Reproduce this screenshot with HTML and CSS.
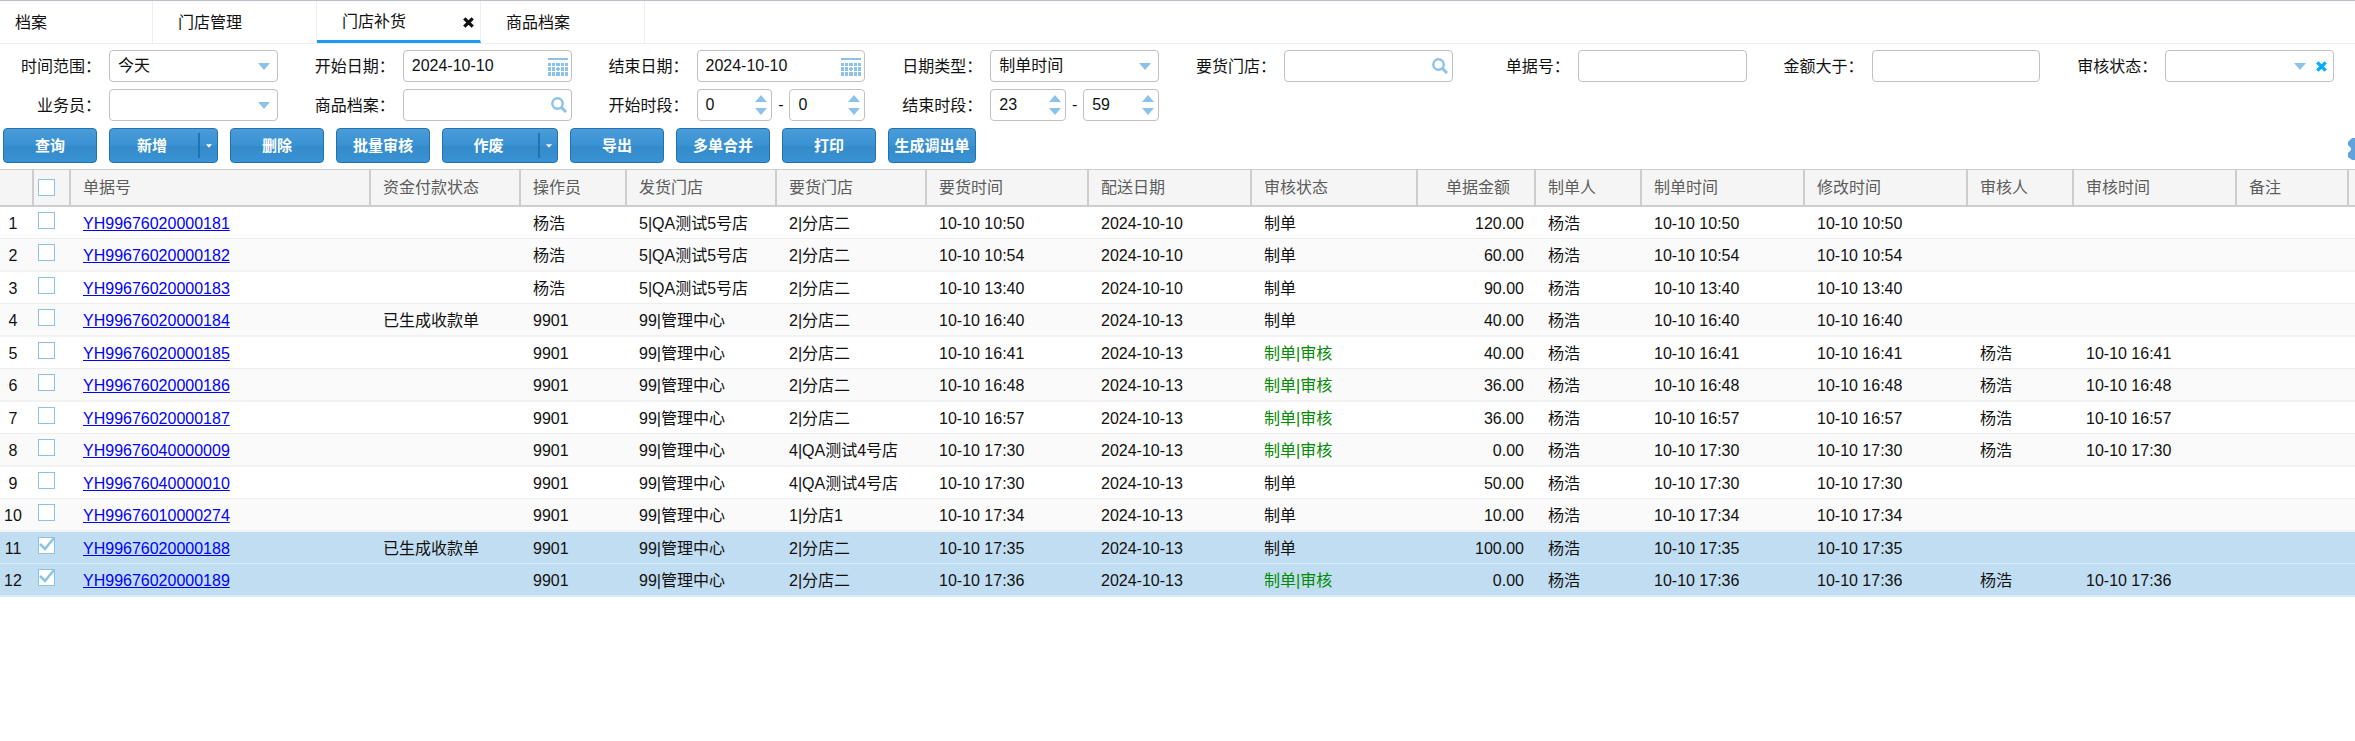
FILE: index.html
```
<!DOCTYPE html>
<html lang="zh-CN">
<head>
<meta charset="utf-8">
<title>门店补货</title>
<link rel="stylesheet" href="styles.css">
</head>
<body>
<svg class="defs" aria-hidden="true">
  <symbol id="calendar" viewBox="0 0 20 18"><path d="M0 0h20v2H0zM0 5h3v3H0zM4 5h3v3H4zM8 5h4v3H8zM13 5h3v3h-3zM17 5h3v3h-3zM0 9h3v4H0zM4 9h3v4H4zM9 9h2v1h1v2h-1v1H9v-1H8v-2h1zM13 9h3v4h-3zM17 9h3v4h-3zM0 14h3v4H0zM4 14h3v4H4zM8 14h4v4H8zM13 14h3v4h-3zM17 14h3v4h-3z" fill="currentColor"/></symbol>
  <symbol id="search" viewBox="0 0 16 16"><circle cx="6.5" cy="6.5" r="5.2" fill="none" stroke="currentColor" stroke-width="2.4"/><path d="M10.5 10.5L15 15" stroke="currentColor" stroke-width="3"/></symbol>
  <symbol id="down" viewBox="0 0 12 7"><path d="M0 0h12L6 7z" fill="currentColor"/></symbol>
  <symbol id="up" viewBox="0 0 12 7"><path d="M0 7h12L6 0z" fill="currentColor"/></symbol>
  <symbol id="cross" viewBox="0 0 10 10"><path d="M1.200 1.200l7.600 7.600M8.800 1.200l-7.600 7.600" stroke="currentColor" stroke-width="3"/></symbol>
</svg>
<nav class="tabs">
  <a class="tab tab-first" href="#">档案</a>
  <a class="tab" href="#">门店管理</a>
  <div class="tab tab-active"><a href="#">门店补货</a><button class="tab-close" aria-label="关闭"><svg><use href="#cross"/></svg></button></div>
  <a class="tab" href="#">商品档案</a>
</nav>
<form class="filters">
  <div class="cell"><label for="range">时间范围：</label><div class="field"><select id="range"><option>今天</option></select><svg class="i-tri"><use href="#down"/></svg></div></div>
  <div class="cell"><label for="d1">开始日期：</label><div class="field"><input id="d1" type="text" value="2024-10-10"><svg class="i-cal"><use href="#calendar"/></svg></div></div>
  <div class="cell"><label for="d2">结束日期：</label><div class="field"><input id="d2" type="text" value="2024-10-10"><svg class="i-cal"><use href="#calendar"/></svg></div></div>
  <div class="cell"><label for="dtype">日期类型：</label><div class="field"><select id="dtype"><option>制单时间</option></select><svg class="i-tri"><use href="#down"/></svg></div></div>
  <div class="cell"><label for="store">要货门店：</label><div class="field"><input id="store" type="text"><svg class="i-search"><use href="#search"/></svg></div></div>
  <div class="cell"><label for="no">单据号：</label><div class="field"><input id="no" type="text"></div></div>
  <div class="cell"><label for="amt">金额大于：</label><div class="field"><input id="amt" type="text"></div></div>
  <div class="cell"><label for="state">审核状态：</label><div class="field"><select id="state"><option></option></select><svg class="i-tri"><use href="#down"/></svg><button type="button" class="clear" aria-label="清除"><svg><use href="#cross"/></svg></button></div></div>
  <div class="cell"><label for="clerk">业务员：</label><div class="field"><select id="clerk"><option></option></select><svg class="i-tri"><use href="#down"/></svg></div></div>
  <div class="cell"><label for="goods">商品档案：</label><div class="field"><input id="goods" type="text"><svg class="i-search"><use href="#search"/></svg></div></div>
  <div class="cell"><label for="h1">开始时段：</label>
    <div class="field"><input id="h1" type="text" value="0"><span class="spin"><svg><use href="#up"/></svg><svg><use href="#down"/></svg></span></div><span class="dash">-</span>
    <div class="field"><input aria-label="开始分钟" type="text" value="0"><span class="spin"><svg><use href="#up"/></svg><svg><use href="#down"/></svg></span></div></div>
  <div class="cell"><label for="h2">结束时段：</label>
    <div class="field"><input id="h2" type="text" value="23"><span class="spin"><svg><use href="#up"/></svg><svg><use href="#down"/></svg></span></div><span class="dash">-</span>
    <div class="field"><input aria-label="结束分钟" type="text" value="59"><span class="spin"><svg><use href="#up"/></svg><svg><use href="#down"/></svg></span></div></div>
</form>
<div class="toolbar">
  <button class="btn">查询</button>
  <button class="btn btn-split"><span>新增</span><i><svg><use href="#down"/></svg></i></button>
  <button class="btn">删除</button>
  <button class="btn">批量审核</button>
  <button class="btn btn-split btn-wide"><span>作废</span><i><svg><use href="#down"/></svg></i></button>
  <button class="btn">导出</button>
  <button class="btn">多单合并</button>
  <button class="btn">打印</button>
  <button class="btn btn-tight">生成调出单</button>
  <button class="gear" aria-label="设置"><svg viewBox="0 0 22 22"><path d="M4 0h4l3 3 3-3h4l4 4v3l-3 3v2l3 3v3l-4 4h-4l-3-3-3 3H4l-4-3v-4l3-3v-2L0 7V4z" fill="currentColor"/><circle cx="12" cy="11" r="4" fill="#fff"/></svg></button>
</div>
<table class="grid">
  <colgroup><col class="c-num"><col class="c-check"><col class="c-no"><col class="c-shop"><col class="c-user"><col class="c-shop"><col class="c-shop"><col class="c-asked"><col class="c-time"><col class="c-state"><col class="c-amount"><col class="c-user"><col class="c-time"><col class="c-time"><col class="c-user"><col class="c-time"><col class="c-note"><col></colgroup>
  <thead><tr><th></th><th class="ck"><input type="checkbox" aria-label="全选"></th><th>单据号</th><th>资金付款状态</th><th>操作员</th><th>发货门店</th><th>要货门店</th><th>要货时间</th><th>配送日期</th><th>审核状态</th><th class="amount">单据金额</th><th>制单人</th><th>制单时间</th><th>修改时间</th><th>审核人</th><th>审核时间</th><th>备注</th><th></th></tr></thead>
  <tbody id="rows"></tbody>
</table>
<script src="app.js"></script>
</body>
</html>
```

FILE: styles.css
```
* { box-sizing: border-box; }

body {
  margin: 0;
  min-height: 100vh;
  background: #fff;
  color: #111;
  font: 16px/24px "Liberation Sans", "Noto Sans CJK SC", sans-serif;
  overflow-x: hidden;
}

button, input, select { font: inherit; color: inherit; }
button { cursor: pointer; }
svg { display: block; width: 100%; height: 100%; }
.defs { display: none; }

.tabs {
  display: flex;
  height: 44px;
  border-top: 1px solid #b9c0c9;
  border-bottom: 1px solid #eee;
}
.tab {
  display: flex;
  align-items: center;
  width: 164px;
  padding: 2px 6px 0 25px;
  border-right: 1px solid #eee;
  color: #111;
  text-decoration: none;
}
.tab-first { width: 153px; padding-left: 15px; }
.tab a { color: inherit; text-decoration: none; }
.tab-active { justify-content: space-between; padding-top: 3px; border-bottom: 3px solid #1b9af7; }
.tab-close {
  width: 11px;
  height: 11px;
  padding: 0;
  border: 0;
  background: none;
}

.filters {
  display: grid;
  grid-template-columns: repeat(8, 1fr);
  row-gap: 7px;
  padding: 6px 5px 7px 0;
}
.cell { display: flex; align-items: center; padding-right: 16px; }
.cell label { flex: 0 0 101px; margin-right: 8px; padding-top: 2px; text-align: right; white-space: nowrap; }
.field { position: relative; flex: 1; min-width: 0; color: #8cc2e9; }
.field input, .field select {
  display: block;
  width: 100%;
  height: 32px;
  padding: 0 8px;
  border: 1px solid #c0c0c0;
  border-radius: 4px;
  background: #fff;
  color: #111;
  appearance: none;
  outline: 0;
}
.dash { width: 17px; text-align: center; }
.i-tri, .i-cal, .i-search, .clear, .spin { position: absolute; }
.i-tri { top: 13px; right: 8px; width: 12px; height: 7px; }
.i-cal { top: 8px; right: 4px; width: 20px; height: 18px; }
.i-search { top: 8px; right: 5px; width: 16px; height: 16px; }
.clear { top: 11px; right: 7px; width: 11px; height: 11px; padding: 0; border: 0; background: none; color: #00aeff; }
.field:has(.clear) .i-tri { right: 28px; }
.spin { top: 6px; right: 5px; display: grid; gap: 6px; width: 12px; }
.spin svg { height: 7px; }

.toolbar {
  display: flex;
  gap: 12px;
  padding: 0 0 6px 3px;
  overflow: hidden;
}
.btn {
  flex: 0 0 94px;
  height: 35px;
  padding: 0;
  border: 1px solid #1f73b3;
  border-radius: 4px;
  background: linear-gradient(#4b9cd7, #3892d4 50%, #358ac8 52%, #3892d4);
  color: #fff;
  font-size: 15px;
  font-weight: bold;
  white-space: nowrap;
}
.btn-split { display: flex; align-items: center; flex-basis: 109px; }
.btn-wide { flex-basis: 116px; }
.btn-tight { flex-basis: 88px; }
.btn-split span { flex: 1; padding-right: 4px; }
.btn-split i { display: grid; place-items: center; width: 19px; height: 25px; border-left: 2px solid #1f73b3; }
.btn-split i svg { width: 6px; height: 4px; }
.gear {
  flex: 0 0 22px;
  align-self: center;
  height: 22px;
  margin: 6px -15px 0 auto;
  padding: 0;
  border: 0;
  background: none;
  color: #5fa2dd;
}

.grid {
  width: 100%;
  table-layout: fixed;
  border-collapse: separate;
  border-spacing: 0;
  line-height: 20px;
}
.c-num { width: 34px; }
.c-check { width: 37px; }
.c-no { width: 300px; }
.c-user { width: 106px; }
.c-amount { width: 118px; }
.c-shop { width: 150px; }
.c-asked { width: 162px; }
.c-time { width: 163px; }
.c-state { width: 166px; }
.c-note { width: 112px; }
.grid th, .grid td {
  padding: 0 12px;
  text-align: left;
  font-weight: 400;
  white-space: nowrap;
}
.grid th {
  height: 38px;
  border: solid #cdcdcd;
  border-width: 1px 2px 2px 0;
  background: #f5f5f5;
  color: #5c5c5c;
}
.grid th:last-child { padding: 0; border-right: 0; }
.grid td:last-child { padding: 0; }
.grid td { height: 32px; padding-top: 2px; border-bottom: 1px solid #ededed; }
.grid tr:nth-child(even) td { height: 33px; border-bottom-width: 2px; border-color: #f2f2f2; }
.grid tbody tr:nth-child(even) { background: #fafafa; }
.grid tbody tr.selected { background: #c1ddf1; }
.grid tbody tr.selected td { border-color: #d7eaf8; }
.grid td:first-child { padding-left: 0; padding-right: 8px; text-align: center; }
.grid .ck { padding: 0 0 0 4px; }
.grid td.amount { text-align: right; }
.grid th.amount { padding-right: 24px; text-align: right; }
.grid a { color: #00f; text-decoration: underline; }
.grid .audited { color: #008a00; }
.ck input {
  display: block;
  width: 17px;
  height: 17px;
  margin: 0;
  border: 1px solid #8cc2e9;
  background: #fff;
  appearance: none;
}
.grid td.ck { padding-bottom: 4px; }
.ck input:checked {
  background: #fff url("data:image/svg+xml,%3Csvg xmlns='http://www.w3.org/2000/svg' viewBox='0 0 15 15'%3E%3Cpath d='M1 6l5 5 9-11' fill='none' stroke='%238cc2e9' stroke-width='2.500'/%3E%3C/svg%3E");
}
```

FILE: app.js
```
const rows = [
  ["YH99676020000181", "", "杨浩", "5|QA测试5号店", "2|分店二", "10:50", "10", 0, "120.00"],
  ["YH99676020000182", "", "杨浩", "5|QA测试5号店", "2|分店二", "10:54", "10", 0, "60.00"],
  ["YH99676020000183", "", "杨浩", "5|QA测试5号店", "2|分店二", "13:40", "10", 0, "90.00"],
  ["YH99676020000184", "已生成收款单", "9901", "99|管理中心", "2|分店二", "16:40", "13", 0, "40.00"],
  ["YH99676020000185", "", "9901", "99|管理中心", "2|分店二", "16:41", "13", 1, "40.00"],
  ["YH99676020000186", "", "9901", "99|管理中心", "2|分店二", "16:48", "13", 1, "36.00"],
  ["YH99676020000187", "", "9901", "99|管理中心", "2|分店二", "16:57", "13", 1, "36.00"],
  ["YH99676040000009", "", "9901", "99|管理中心", "4|QA测试4号店", "17:30", "13", 1, "0.00"],
  ["YH99676040000010", "", "9901", "99|管理中心", "4|QA测试4号店", "17:30", "13", 0, "50.00"],
  ["YH99676010000274", "", "9901", "99|管理中心", "1|分店1", "17:34", "13", 0, "10.00"],
  ["YH99676020000188", "已生成收款单", "9901", "99|管理中心", "2|分店二", "17:35", "13", 0, "100.00"],
  ["YH99676020000189", "", "9901", "99|管理中心", "2|分店二", "17:36", "13", 1, "0.00"]
];
document.getElementById("rows").innerHTML = rows.map(([no, pay, op, from, to, time, day, audited, amount], i) => {
  const at = "10-10 " + time;
  const selected = i >= 10;
  return `<tr class="${selected ? "selected" : ""}"><td>${i + 1}</td>
    <td class="ck"><input type="checkbox" aria-label="选择 ${no}" ${selected ? "checked" : ""}></td>
    <td><a href="#">${no}</a></td><td>${pay}</td><td>${op}</td><td>${from}</td><td>${to}</td>
    <td>${at}</td><td>2024-10-${day}</td>
    <td class="${audited ? "audited" : ""}">${audited ? "制单|审核" : "制单"}</td>
    <td class="amount">${amount}</td><td>杨浩</td><td>${at}</td><td>${at}</td>
    <td>${audited ? "杨浩" : ""}</td><td>${audited ? at : ""}</td><td></td><td></td></tr>`;
}).join("");
```
